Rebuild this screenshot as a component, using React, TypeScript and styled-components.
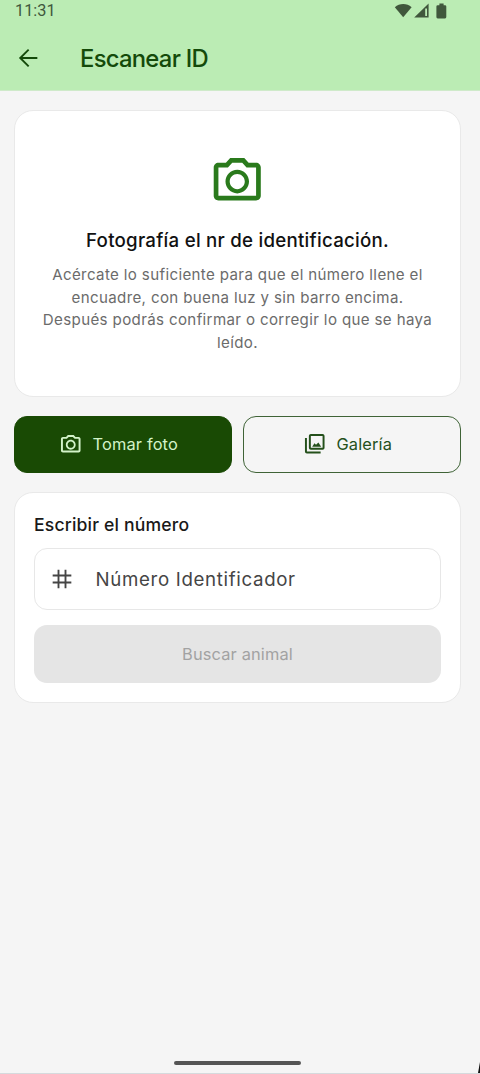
import React from 'react';
import styled, { createGlobalStyle } from 'styled-components';

const GlobalStyle = createGlobalStyle`
  * { box-sizing: border-box; }
  html, body { margin: 0; background: #f5f5f5; }
  body { font-family: Inter, Roboto, sans-serif; overflow: hidden; }
  button { font: inherit; margin: 0; padding: 0; }
`;

const Screen = styled.div`
  position: relative;
  display: flex;
  flex-direction: column;
  height: 1074px;
  width: 480px;
  background: #f5f5f5;
  border-bottom: 1px solid #d5dadd;
`;

const Header = styled.header`
  height: 91px;
  background: #bbecb4;
  border-bottom: 1px solid #cfeaca;
  flex: none;
`;

const StatusBar = styled.div`
  display: flex;
  justify-content: space-between;
  align-items: center;
  height: 21px;
  padding: 0 33px 0 15px;
  color: #40573c;
`;

const Clock = styled.span`
  font-family: Roboto, sans-serif;
  font-size: 16.3px;
  line-height: 20px;
`;

const StatusIcons = styled.svg`
  display: block;
  width: 53px;
  height: 18px;
`;

const TitleBar = styled.div`
  display: flex;
  align-items: center;
  height: 74px;
  padding-left: 14px;
  color: #144a0a;
`;

const BackButton = styled.button`
  display: flex;
  border: 0;
  background: none;
  color: inherit;
  margin-right: 38px;
`;

const Title = styled.h1`
  margin: 0;
  padding-top: 1px;
  font-size: 23.8px;
  font-weight: 500;
  letter-spacing: -0.72px;
  line-height: 30px;
`;

const Content = styled.main`
  display: flex;
  flex-direction: column;
  gap: 19px;
  padding: 19px 19px 0 14px;
`;

const Card = styled.section`
  background: #fff;
  border: 1.5px solid #e9e9e9;
  border-radius: 19px;
`;

const IntroCard = styled(Card)`
  display: flex;
  flex-direction: column;
  align-items: center;
  height: 287px;
  padding-top: 40px;
  color: #2a7a1c;
  text-align: center;
`;

const IntroTitle = styled.h2`
  margin: 19px 0 0;
  color: #111;
  font-size: 18.7px;
  font-weight: 500;
  letter-spacing: 0.25px;
  line-height: 28px;
`;

const IntroText = styled.p`
  margin: 9.5px 0 0;
  color: #6b6b6b;
  font-size: 15.1px;
  letter-spacing: 0.36px;
  line-height: 22.5px;
  white-space: nowrap;
`;

const Actions = styled.div`
  display: grid;
  grid-template-columns: 218px 218px;
  justify-content: space-between;
`;

const ActionButton = styled.button<{ $filled?: boolean }>`
  display: flex;
  align-items: center;
  justify-content: center;
  gap: 10px;
  height: 57px;
  padding: 0 9px 1px 0;
  border: 1.2px solid ${p => (p.$filled ? '#194a04' : '#3f6337')};
  border-radius: 13px;
  background: ${p => (p.$filled ? '#194a04' : 'transparent')};
  color: ${p => (p.$filled ? '#d3f3c9' : '#24501b')};
  font-size: 16.4px;
  letter-spacing: 0.15px;
`;

const FormCard = styled(Card)`
  height: 211px;
  padding: 18px 19px;
`;

const FormTitle = styled.h2`
  margin: 0;
  color: #191919;
  font-size: 17.6px;
  font-weight: 500;
  letter-spacing: 0.17px;
  line-height: 28px;
`;

const Field = styled.div`
  display: flex;
  align-items: center;
  gap: 19.5px;
  height: 62px;
  margin-top: 9px;
  padding-left: 13px;
  border: 1.5px solid #e7e7e7;
  border-radius: 13px;
  color: #454545;
  font-size: 18.7px;
  letter-spacing: 0.66px;
`;

const SearchButton = styled.button`
  display: block;
  width: 100%;
  height: 58px;
  margin-top: 15px;
  border: 0;
  border-radius: 13px;
  background: #e5e5e5;
  color: #a2a2a2;
  font-size: 16.4px;
  letter-spacing: 0.15px;
`;

const HomeIndicator = styled.div`
  width: 127px;
  height: 4px;
  margin: auto 0 8px 174px;
  border-radius: 2px;
  background: #555;
`;

const CornerMark = styled.svg`
  position: absolute;
  right: 0;
  bottom: 0;
`;

const Icon = ({ size, d }: { size: number; d: string }) => (
  <svg width={size} height={size} viewBox="0 0 24 24" fill="currentColor" aria-hidden="true">
    <path d={d} />
  </svg>
);

const BACK = 'M20 11.1H7.4l5.7-5.7L12 4.2 4.2 12l7.8 7.8 1.15-1.2-5.75-5.7H20z';
const CAMERA =
  'M14.12 5l1.83 2H20v12H4V7h4.05l1.83-2h4.24M15 3H9L7.17 5H4c-1.1 0-2 .9-2 2v12c0 1.1.9 2 2 2h16c1.1 0 2-.9 2-2V7c0-1.1-.9-2-2-2h-3.17L15 3zm-3 6.8c1.76 0 3.2 1.44 3.2 3.2s-1.44 3.2-3.2 3.2-3.2-1.44-3.2-3.2 1.44-3.2 3.2-3.2m0-1.8c-2.76 0-5 2.24-5 5s2.24 5 5 5 5-2.24 5-5-2.24-5-5-5z';
const GALLERY =
  'M20 4v12H8V4h12m0-2H8c-1.1 0-2 .9-2 2v12c0 1.1.9 2 2 2h12c1.1 0 2-.9 2-2V4c0-1.1-.9-2-2-2zm-8.3 9.5l1.6 1.6 2.4-2.4L18.6 15H9.4l2.3-3.5zM2 6v14c0 1.1.9 2 2 2h14v-2H4V6H2z';
const TAG =
  'M20 9.8V8.2h-4.2V4h-1.6v4.2H9.8V4H8.2v4.2H4v1.6h4.2v4.4H4v1.6h4.2V20h1.6v-4.2h4.4V20h1.6v-4.2H20v-1.6h-4.2V9.8H20zm-5.8 4.4H9.8V9.8h4.4v4.4z';

export default function App() {
  return (
    <Screen>
      <GlobalStyle />
      <Header>
        <StatusBar>
          <Clock>11:31</Clock>
          <StatusIcons viewBox="0 0 53 18" fill="currentColor">
            <path d="M0.8 5.2C5.5 1 13 1 17.6 5.2L9.2 15.2z" />
            <path fillRule="evenodd" d="M34.6 1.4V15.6H20.2zM31.2 6.6V14h1.8V6.6z" />
            <path d="M43.7 3.2h1.7V1.6h4.2v1.6h1.4q1.3 0 1.3 1.3v10.6q0 1.3-1.3 1.3h-7.3q-1.3 0-1.3-1.3V4.5q0-1.3 1.3-1.3z" />
          </StatusIcons>
        </StatusBar>
        <TitleBar>
          <BackButton aria-label="Volver">
            <Icon size={28} d={BACK} />
          </BackButton>
          <Title>Escanear ID</Title>
        </TitleBar>
      </Header>
      <Content>
        <IntroCard>
          <Icon size={56.5} d={CAMERA} />
          <IntroTitle>Fotografía el nr de identificación.</IntroTitle>
          <IntroText>
            Acércate lo suficiente para que el número llene el
            <br />
            encuadre, con buena luz y sin barro encima.
            <br />
            Después podrás confirmar o corregir lo que se haya
            <br />
            leído.
          </IntroText>
        </IntroCard>
        <Actions>
          <ActionButton $filled>
            <Icon size={23.5} d={CAMERA} />
            <span>Tomar foto</span>
          </ActionButton>
          <ActionButton>
            <Icon size={23.5} d={GALLERY} />
            <span>Galería</span>
          </ActionButton>
        </Actions>
        <FormCard>
          <FormTitle>Escribir el número</FormTitle>
          <Field>
            <Icon size={28} d={TAG} />
            <span>Número Identificador</span>
          </Field>
          <SearchButton disabled>Buscar animal</SearchButton>
        </FormCard>
      </Content>
      <HomeIndicator />
      <CornerMark width="3" height="12" viewBox="0 0 3 12">
        <path d="M3 1V12H1z" fill="#111" />
      </CornerMark>
    </Screen>
  );
}
